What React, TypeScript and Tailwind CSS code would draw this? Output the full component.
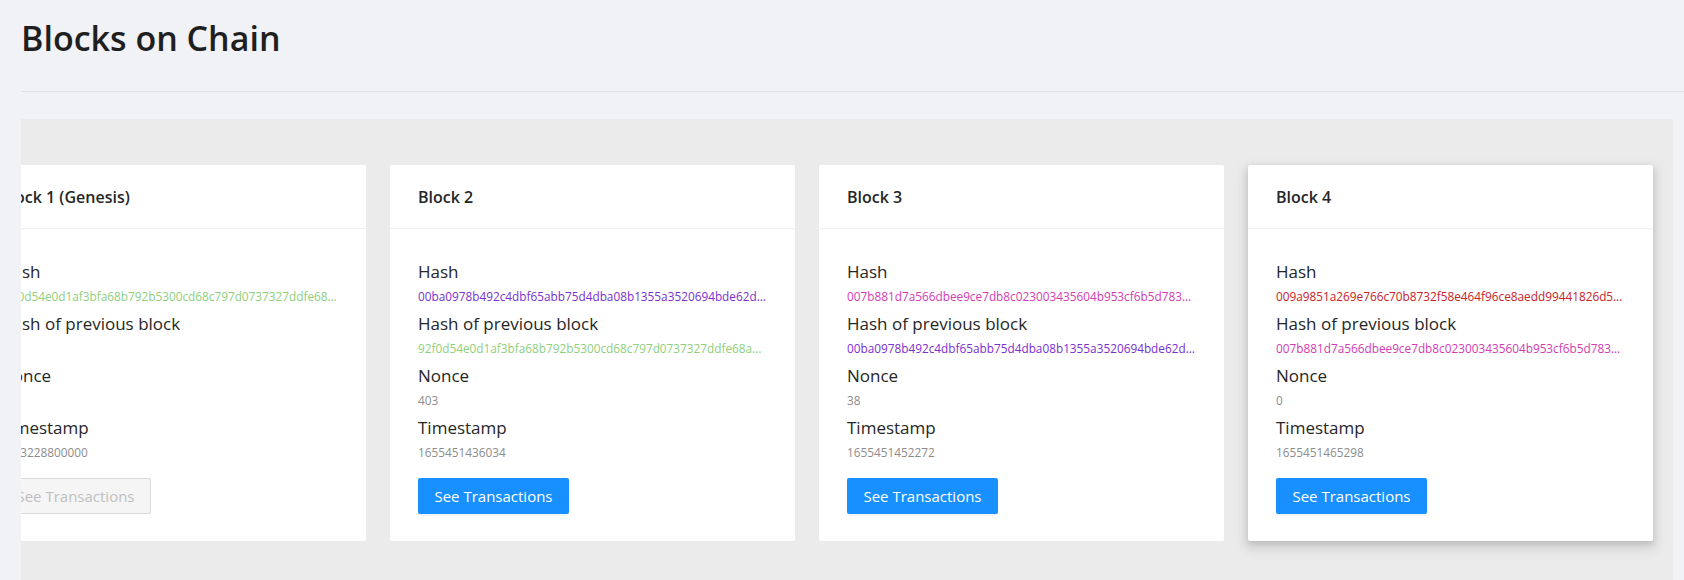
import React from "react";

type Block = {
  title: string;
  hash: string;
  hashColor: string;
  prevHash: string;
  prevColor: string;
  nonce: string;
  timestamp: string;
  genesis?: boolean;
};

const blocks: Block[] = [
  {
    title: "Block 1 (Genesis)",
    hash: "92f0d54e0d1af3bfa68b792b5300cd68c797d0737327ddfe68a1c5e8b36d2f0a",
    hashColor: "text-[#8dcf7e]",
    prevHash: "0",
    prevColor: "text-[#8c8c8c]",
    nonce: "0",
    timestamp: "1483228800000",
    genesis: true,
  },
  {
    title: "Block 2",
    hash: "00ba0978b492c4dbf65abb75d4dba08b1355a3520694bde62d7a1f0c3e9b4d2a",
    hashColor: "text-[#7a2fd0]",
    prevHash: "92f0d54e0d1af3bfa68b792b5300cd68c797d0737327ddfe68a1c5e8b36d2f0a",
    prevColor: "text-[#8dcf7e]",
    nonce: "403",
    timestamp: "1655451436034",
  },
  {
    title: "Block 3",
    hash: "007b881d7a566dbee9ce7db8c023003435604b953cf6b5d783e2a9c10f4b7d6e",
    hashColor: "text-[#d43bb3]",
    prevHash: "00ba0978b492c4dbf65abb75d4dba08b1355a3520694bde62d7a1f0c3e9b4d2a",
    prevColor: "text-[#7a2fd0]",
    nonce: "38",
    timestamp: "1655451452272",
  },
  {
    title: "Block 4",
    hash: "009a9851a269e766c70b8732f58e464f96ce8aedd99441826d5c0b7e2f1a3c9d",
    hashColor: "text-[#c8211f]",
    prevHash: "007b881d7a566dbee9ce7db8c023003435604b953cf6b5d783e2a9c10f4b7d6e",
    prevColor: "text-[#d43bb3]",
    nonce: "0",
    timestamp: "1655451465298",
  },
];

const Field = ({ label, value, color }: { label: string; value: string; color: string }) => (
  <div className="mb-[3px]">
    <div className="text-[17px] leading-[27px] text-[#262626]">{label}</div>
    <div className={`text-[11.8px] leading-[22px] truncate ${color}`}>{value}</div>
  </div>
);

const BlockCard = ({ block, index }: { block: Block; index: number }) => (
  <div
    className={`shrink-0 bg-white rounded-[2px] h-[376px] flex flex-col ${
      index === 0 ? "w-[394px]" : "w-[405px]"
    } ${
      index === 3
        ? "shadow-[0_1px_2px_-2px_rgba(0,0,0,0.16),0_3px_6px_0_rgba(0,0,0,0.12),0_5px_12px_4px_rgba(0,0,0,0.09)]"
        : ""
    }`}
  >
    <div className="h-[64px] border-b border-[#f0f0f0] px-[28px] pt-[20px]">
      <div className="text-[16px] leading-[24px] font-semibold text-[#262626] whitespace-nowrap">
        {block.title}
      </div>
    </div>
    <div className="px-[28px] pt-[29px]">
      <Field label="Hash" value={block.hash} color={block.hashColor} />
      <Field label="Hash of previous block" value={block.prevHash} color={block.prevColor} />
      <Field label="Nonce" value={block.nonce} color="text-[#8c8c8c]" />
      <Field label="Timestamp" value={block.timestamp} color="text-[#8c8c8c]" />
      <div className="pt-[12px]">
        {block.genesis ? (
          <button
            disabled
            className="h-[36px] w-[151px] rounded-[2px] border border-[#d9d9d9] bg-[#f5f5f5] text-[15px] text-[#bfbfbf]"
          >
            See Transactions
          </button>
        ) : (
          <button className="h-[36px] w-[151px] rounded-[2px] bg-[#1890ff] text-[15px] text-white shadow-[0_2px_0_rgba(0,0,0,0.045)]">
            See Transactions
          </button>
        )}
      </div>
    </div>
  </div>
);

export default function App() {
  return (
    <div className="min-h-screen bg-[#f0f2f5] pl-[21px] pr-[11px] font-['Open_Sans',sans-serif]">
      <div className="h-[92px] border-b border-[#dfe1e6] -mr-[11px] pt-[17px]">
        <h1 className="text-[34px] leading-[42px] font-semibold text-[#1f1f1f]">
          Blocks on Chain
        </h1>
      </div>
      <div className="mt-[27px] bg-[#ebebeb] overflow-hidden pt-[46px] pb-[60px]">
        <div className="flex gap-6 -ml-[49px]">
          {blocks.map((b, i) => (
            <BlockCard key={b.title} block={b} index={i} />
          ))}
        </div>
      </div>
    </div>
  );
}
